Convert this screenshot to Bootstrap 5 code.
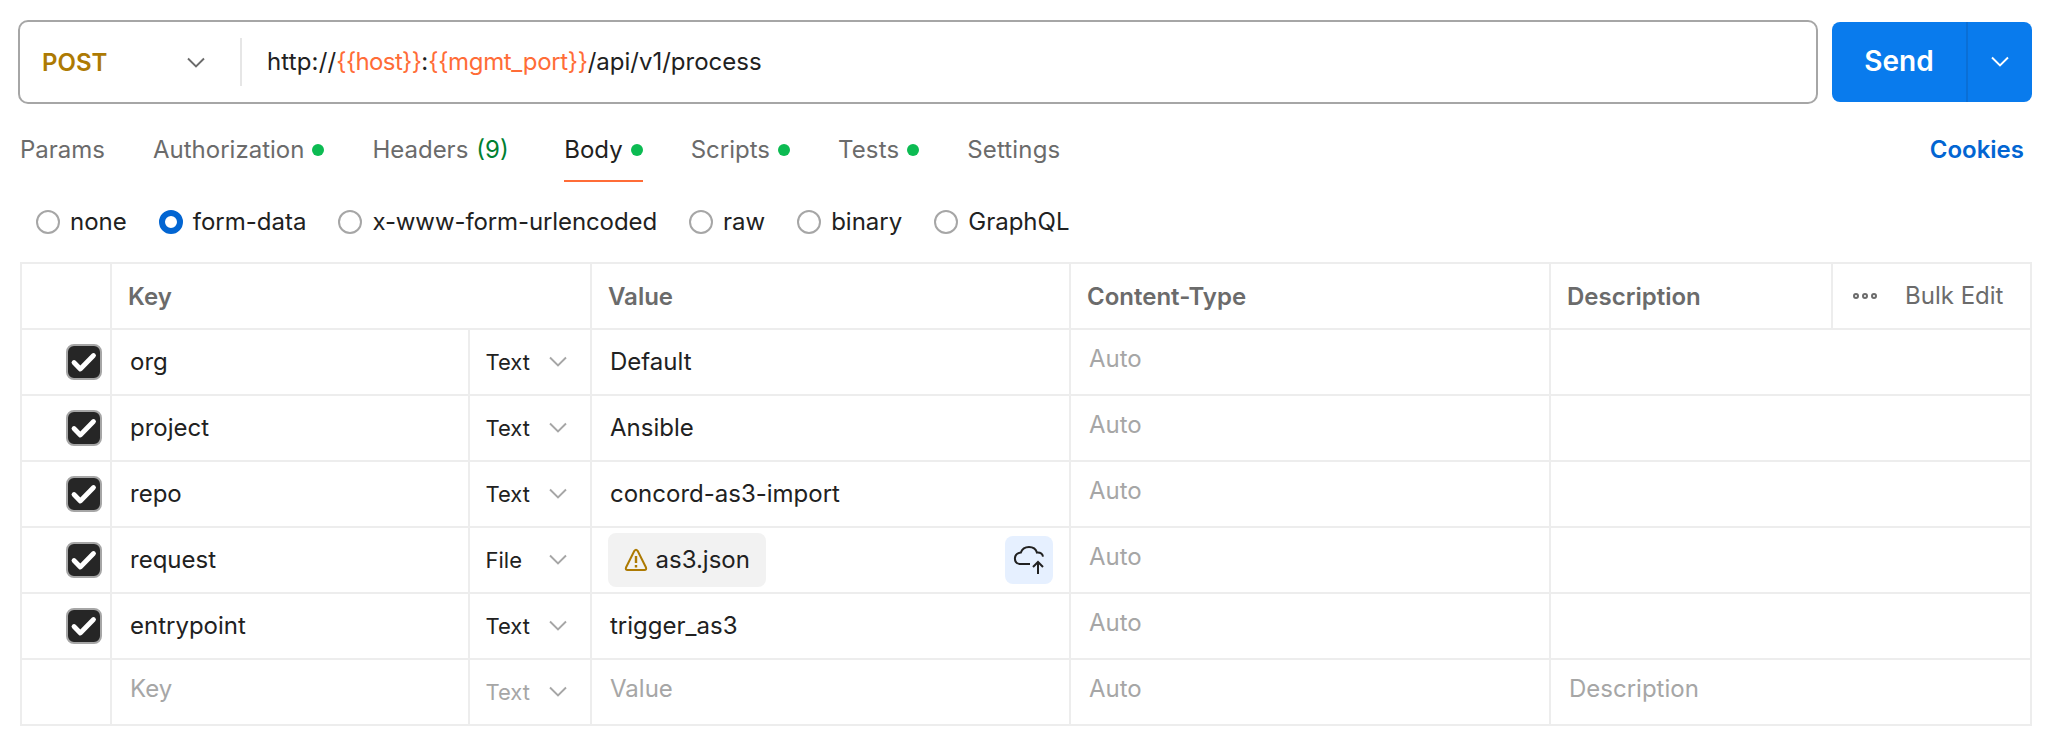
<!DOCTYPE html>
<html lang="en">
<head>
<meta charset="utf-8">
<title>Request builder</title>
<link href="https://cdn.jsdelivr.net/npm/bootstrap@5.3.0/dist/css/bootstrap.min.css" rel="stylesheet">
<style>
body{font-family:Inter,"Liberation Sans",sans-serif;font-size:24px;line-height:32px;color:#212121;background:#fff;overflow:hidden}
.page-wrap{padding:20px 14px 0 18px}
.url-box{height:84px;width:1800px;border:2px solid #a6a6a6;border-radius:10px}
.method{width:222px;height:48px;padding:1px 35px 0 22px;border-right:2px solid #e6e6e6;color:#ad7a03;font-weight:600}
.url-text{padding-left:25px}
.url-var{color:#ff6c37}
.host-var{letter-spacing:-.62px}
.port-var{letter-spacing:-.33px}
.scheme{letter-spacing:.15px}
.send-group{height:80px;width:200px}
.send-btn,.send-more{background:#097bed;color:#fff;border:0;border-radius:8px;padding:0}
.send-btn{width:134px;font-size:28px;font-weight:600;padding-bottom:2px}
.btn-group>.send-more.btn:not(:first-child){width:66px;border-left:2px solid #0a6fd6;margin-left:0}
.req-tabs{height:78px;padding:0 8px 0 2px;gap:48px;color:#6b6b6b}
.req-tab{height:78px;gap:8px;border-bottom:2px solid transparent;padding-top:16px}
.req-tab.current{color:#212121;border-color:#ff6c37}
.req-tab.wide{letter-spacing:.15px}
.dot{width:12px;height:12px;border-radius:50%;background:#0cbb52}
.count{color:#007f31;margin-right:7.5px}
.cookies{color:#0265d2;font-weight:600}
.modes{height:80px;padding-left:18px;gap:32px}
.mode{gap:10px}
.long-name{letter-spacing:-.1px}
.ring{width:24px;height:24px;border:2px solid #a6a6a6;border-radius:50%}
.ring.on{border:6px solid #0265d2}
.kv{margin-left:2px;border-left:2px solid #ededed;border-top:2px solid #ededed;width:2012px}
.kv-row{display:grid;grid-template-columns:90px 358px 122px 479px 480px 481px;height:66px}
.kv-row.head{grid-template-columns:90px 480px 479px 480px 282px 199px;color:#6b6b6b;font-weight:600}
.kv-row>div{border-right:2px solid #ededed;border-bottom:2px solid #ededed;padding:0 18px;display:flex;align-items:center;min-width:0}
.kv-row.head>div{padding:2px 16px 0}
.kv-row.head>.tools{padding:0 20px;gap:27px;font-weight:400}
.kv-row>.type{padding:0 23px 0 15.5px;font-size:22px;justify-content:space-between}
.kv-row>.hint{color:#a6a6a6;padding-bottom:6px}
.kv-row>.pick{padding:0 8px 0 0;justify-content:flex-end}
.kv-row>.file{padding:0 16px;justify-content:space-between}
.kv-row>.ghost{color:#a6a6a6}
.chip{height:54px;width:158px;background:#f2f2f2;border-radius:8px;padding-left:16px;gap:7.5px}
.upload{width:48px;height:48px;border-radius:8px;background:#e6f0ff}
svg{display:block;flex:none}
.type svg{color:#a6a6a6}
</style>
</head>
<body>
<svg width="0" height="0" class="position-absolute">
<defs>
<symbol id="chev" viewBox="0 0 18 12"><path d="M1 1.5 9 9.5 17 1.5" fill="none" stroke="currentColor" stroke-width="1.9"/></symbol>
<symbol id="check" viewBox="0 0 36 36"><rect x="1" y="1" width="34" height="34" rx="7" fill="#262626" stroke="#a6a6a6" stroke-width="2"/><path d="M8 18.5 14.3 25 27.5 11.5" fill="none" stroke="#fff" stroke-width="4.8" stroke-linecap="round" stroke-linejoin="round"/></symbol>
</defs>
</svg>
<div class="page-wrap">
  <div class="d-flex align-items-center justify-content-between">
    <div class="url-box d-flex align-items-center">
      <div class="method d-flex align-items-center justify-content-between">POST <svg width="18" height="12" color="#6b6b6b"><use href="#chev"/></svg></div>
      <div class="url-text"><span class="scheme">http://</span><span class="url-var host-var">{{host}}</span>:<span class="url-var port-var">{{mgmt_port}}</span>/api/v1/process</div>
    </div>
    <div class="btn-group send-group">
      <button class="btn send-btn flex-grow-0">Send</button>
      <button class="btn send-more flex-grow-0 d-flex align-items-center justify-content-center" aria-label="More"><svg width="18" height="12"><use href="#chev"/></svg></button>
    </div>
  </div>
  <div class="req-tabs d-flex">
    <div class="req-tab d-flex align-items-center">Params</div>
    <div class="req-tab d-flex align-items-center"><span>Authorization</span><i class="dot"></i></div>
    <div class="req-tab d-flex align-items-center"><span>Headers</span><span class="count">(9)</span></div>
    <div class="req-tab current d-flex align-items-center"><span>Body</span><i class="dot"></i></div>
    <div class="req-tab d-flex align-items-center"><span>Scripts</span><i class="dot"></i></div>
    <div class="req-tab wide d-flex align-items-center"><span>Tests</span><i class="dot"></i></div>
    <div class="req-tab wide d-flex align-items-center">Settings</div>
    <div class="req-tab d-flex align-items-center ms-auto cookies">Cookies</div>
  </div>
  <div class="modes d-flex align-items-center">
    <div class="mode d-flex align-items-center"><i class="ring"></i>none</div>
    <div class="mode d-flex align-items-center"><i class="ring on"></i>form-data</div>
    <div class="mode d-flex align-items-center"><i class="ring"></i><span class="long-name">x-www-form-urlencoded</span></div>
    <div class="mode d-flex align-items-center"><i class="ring"></i>raw</div>
    <div class="mode d-flex align-items-center"><i class="ring"></i>binary</div>
    <div class="mode d-flex align-items-center"><i class="ring"></i>GraphQL</div>
  </div>
  <div class="kv">
    <div class="kv-row head"><div></div><div>Key</div><div>Value</div><div>Content-Type</div><div>Description</div>
      <div class="tools"><svg width="25" height="8" fill="none" stroke="#6b6b6b" stroke-width="2"><circle cx="3" cy="4" r="2"/><circle cx="12" cy="4" r="2"/><circle cx="21" cy="4" r="2"/></svg>Bulk Edit</div></div>
    <div class="kv-row"><div class="pick"><svg width="36" height="36"><use href="#check"/></svg></div><div>org</div><div class="type">Text<svg width="18" height="12"><use href="#chev"/></svg></div><div>Default</div><div class="hint">Auto</div><div></div></div>
    <div class="kv-row"><div class="pick"><svg width="36" height="36"><use href="#check"/></svg></div><div>project</div><div class="type">Text<svg width="18" height="12"><use href="#chev"/></svg></div><div>Ansible</div><div class="hint">Auto</div><div></div></div>
    <div class="kv-row"><div class="pick"><svg width="36" height="36"><use href="#check"/></svg></div><div>repo</div><div class="type">Text<svg width="18" height="12"><use href="#chev"/></svg></div><div>concord-as3-import</div><div class="hint">Auto</div><div></div></div>
    <div class="kv-row"><div class="pick"><svg width="36" height="36"><use href="#check"/></svg></div><div>request</div><div class="type">File<svg width="18" height="12"><use href="#chev"/></svg></div>
      <div class="file">
        <div class="chip d-flex align-items-center">
          <svg width="24" height="24" viewBox="0 0 24 24" fill="none" stroke="#ad7a03" stroke-width="2"><path d="M10.4 2.8Q12 .6 13.6 2.8L22 19.5Q22.8 22 20.4 22H3.6Q1.2 22 2 19.5Z" stroke-linejoin="round"/><path d="M12 8v7M12 17v2.6" stroke-width="2.4"/></svg>as3.json
        </div>
        <div class="upload"><svg width="48" height="48" viewBox="0 0 48 48" fill="none" stroke="#212121" stroke-width="2"><path d="M25 28H14.5C8.2 26.8 8.2 17.5 15.8 16.6 17.2 12.8 20.2 11 24 11S30.8 12.8 32 16.6C35.2 16.4 37.5 18 38 20.6M33 38V26M28 31 33 26 38 31"/></svg></div>
      </div><div class="hint">Auto</div><div></div></div>
    <div class="kv-row"><div class="pick"><svg width="36" height="36"><use href="#check"/></svg></div><div>entrypoint</div><div class="type">Text<svg width="18" height="12"><use href="#chev"/></svg></div><div>trigger_as3</div><div class="hint">Auto</div><div></div></div>
    <div class="kv-row"><div></div><div class="hint">Key</div><div class="type ghost">Text<svg width="18" height="12"><use href="#chev"/></svg></div><div class="hint">Value</div><div class="hint">Auto</div><div class="hint">Description</div></div>
  </div>
</div>
<script src="https://cdn.jsdelivr.net/npm/bootstrap@5.3.0/dist/js/bootstrap.bundle.min.js"></script>
</body>
</html>
